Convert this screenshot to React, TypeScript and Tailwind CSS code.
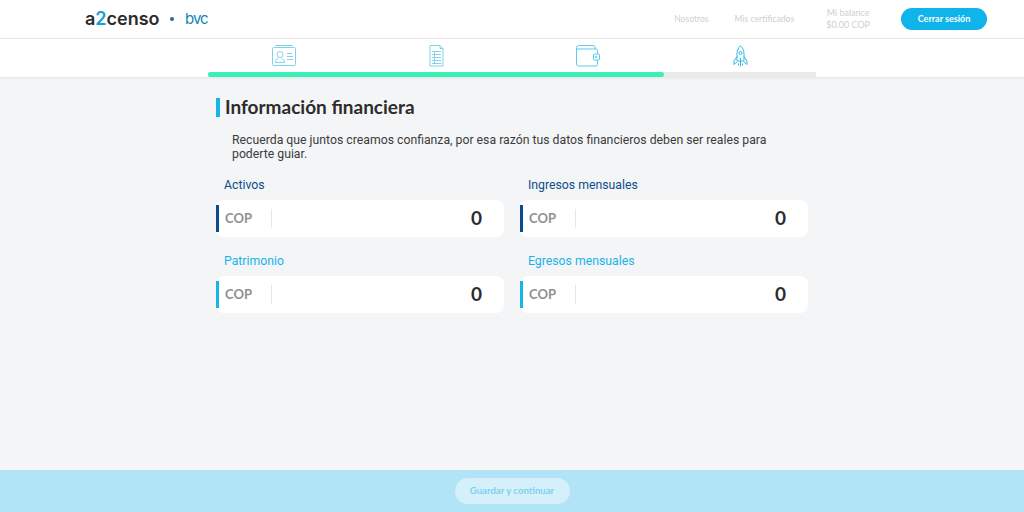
import { FunctionComponent, ReactNode } from "react";

const sans = "font-['Lato','Noto_Sans',sans-serif]";

const IdIcon = () => (
  <svg width="24" height="21" viewBox="0 0 24 21" fill="none" stroke="#7fd3ee" strokeWidth="1">
    <path d="M3 .5h18" />
    <rect x=".5" y="2.5" width="23" height="18" rx="1" />
    <circle cx="8" cy="9.500" r="3" />
    <path d="M3.500 17.500c0-2.500 1.500-3.500 2.800-4M12.500 17.500c0-2.500-1.500-3.500-2.800-4M3.500 17.500h9M15 8.500h5M15 11.500h6M15 14.500h6" />
  </svg>
);

const DocIcon = () => (
  <svg width="15" height="22" viewBox="0 0 15 22" fill="none" stroke="#7fd3ee" strokeWidth="1">
    <path d="M1 .5h10l3 3v17.500H1z" />
    <path d="M11 .5v3h3M3 6.500h9M3 9.500h9M3 12.500h9M3 15.500h9M3 18.500h9M5.500 6.500v12" />
  </svg>
);

const WalletIcon = () => (
  <svg width="24" height="22" viewBox="0 0 24 22" fill="none" stroke="#5ccbec" strokeWidth="1">
    <path d="M21.500 9V5.500a1.500 1.500 0 0 0-1.500-1.500H1M19 4V2a1.500 1.500 0 0 0-1.500-1.500H2.500a2 2 0 0 0-2 2V19a2 2 0 0 0 2 2H20a1.500 1.500 0 0 0 1.500-1.500V15" />
    <rect x="17.500" y="9" width="6" height="6" rx="1" />
    <circle cx="20" cy="12" r=".8" />
  </svg>
);

const RocketIcon = () => (
  <svg width="15" height="22" viewBox="0 0 15 22" fill="none" stroke="#2fb9e6" strokeWidth="1">
    <path d="M7.500.8C5 3 4 6 4 9v7h7V9c0-3-1-6-3.500-8.200z" />
    <circle cx="7.500" cy="8" r="1.500" />
    <path d="M4 11.500 1 16v3.500l3-2.500M11 11.500l3 4.500v3.500L11 17M7.500 13v8.500M5.500 18.500v2M9.500 18.500v2" />
  </svg>
);

const steps = [
  { key: "id", icon: <IdIcon /> },
  { key: "doc", icon: <DocIcon /> },
  { key: "wallet", icon: <WalletIcon /> },
  { key: "rocket", icon: <RocketIcon /> },
];

type MoneyFieldType = {
  label: string;
  labelClass: string;
  barClass: string;
};

const MoneyField: FunctionComponent<MoneyFieldType> = ({ label, labelClass, barClass }) => {
  return (
    <div className="flex flex-col">
      <div className={`pl-2 text-[12.25px] leading-[16px] font-['Roboto',sans-serif] ${labelClass}`}>{label}</div>
      <div className="mt-[7px] h-[37px] bg-white rounded-[8px] flex items-center relative">
        <div className={`absolute left-0 top-[5px] w-[3px] h-[27px] ${barClass}`} />
        <div className={`w-[56px] h-[19px] pl-[9px] border-r border-[#e6e6e6] text-[13px] leading-[19px] font-bold text-[#8f8f8f] ${sans}`}>
          COP
        </div>
        <div className={`flex-1 pr-[22px] pb-[2px] text-right text-[19px] leading-[20px] font-bold text-[#2c2c2c] ${sans}`}>0</div>
      </div>
    </div>
  );
};

const NavText: FunctionComponent<{ children: ReactNode; className?: string }> = ({ children, className = "" }) => (
  <span className={`text-[#cfcfcf] ${sans} ${className}`}>{children}</span>
);

const App: FunctionComponent = () => {
  return (
    <div className="h-screen flex flex-col bg-[#f4f5f7] overflow-hidden">
      <header className="h-[39px] shrink-0 bg-white border-b border-[#e8e8e8] flex items-center pl-[85px] pr-[37px]">
        <div className="flex items-center">
          <span className="w-[77px] text-[18px] leading-[24px] font-semibold text-[#2b2b2b] font-['Inter',sans-serif] whitespace-nowrap">
            a<span className="text-[#1a9fd8]">2</span>censo
          </span>
          <span className="w-[4px] h-[4px] rounded-full bg-[#1f6f94] ml-[8px]" />
          <span className="ml-[11px] text-[15px] leading-[24px] text-[#1386b5] tracking-[-1px] font-['Inter',sans-serif]">bvc</span>
        </div>
        <nav className="ml-auto flex items-center">
          <NavText className="text-[8.6px]">Nosotros</NavText>
          <NavText className="ml-[26px] text-[8.6px]">Mis certificados</NavText>
          <div className="ml-[32px] flex flex-col items-center">
            <NavText className="text-[9px] leading-[12px] text-[#adadad]">Mi balance</NavText>
            <NavText className="text-[9px] leading-[12px]">$0.00 COP</NavText>
          </div>
          <button className={`ml-[31px] w-[86px] h-[22px] rounded-full bg-[#0fb4ea] text-white text-[9px] font-bold ${sans}`}>
            Cerrar sesión
          </button>
        </nav>
      </header>

      <div className="h-[38px] shrink-0 bg-white shadow-[0_1px_3px_rgba(0,0,0,0.08)] flex flex-col items-center">
        <div className="w-[608px] h-[33px] grid grid-cols-4">
          {steps.map((s) => (
            <div key={s.key} className="flex items-center justify-center">
              {s.icon}
            </div>
          ))}
        </div>
        <div className="w-[608px] h-[5px] bg-[#e9e9ea]">
          <div className="w-[456px] h-full bg-[#3bf0b6] rounded-[3px]" />
        </div>
      </div>

      <main className="flex-1 w-[592px] mx-auto">
        <div className="mt-[21px] flex items-center h-[19px]">
          <div className="w-[4px] h-[19px] bg-[#18b4e8]" />
          <h1 className={`ml-[5px] pb-[2px] text-[19px] leading-[19px] font-bold text-[#2c2c2c] ${sans}`}>
            Información financiera
          </h1>
        </div>
        <p className="mt-[16px] pl-[16px] pr-[30px] text-[12.25px] leading-[14px] text-[#3c3c3c] font-['Roboto',sans-serif]">
          Recuerda que juntos creamos confianza, por esa razón tus datos financieros deben ser reales para poderte guiar.
        </p>
        <div className="mt-[16px] grid grid-cols-2 gap-x-[16px] gap-y-[16px]">
          <MoneyField label="Activos" labelClass="text-[#0f4c8a]" barClass="bg-[#0b4a8f]" />
          <MoneyField label="Ingresos mensuales" labelClass="text-[#0f4c8a]" barClass="bg-[#0b4a8f]" />
          <MoneyField label="Patrimonio" labelClass="text-[#18b4e8]" barClass="bg-[#18b4e8]" />
          <MoneyField label="Egresos mensuales" labelClass="text-[#18b4e8]" barClass="bg-[#18b4e8]" />
        </div>
      </main>

      <footer className="h-[42px] shrink-0 bg-[#b2e4f7] flex items-center justify-center">
        <button className={`w-[115px] h-[26px] rounded-full bg-[#d5f0fb] text-[#7fd0ef] text-[9.6px] font-bold ${sans}`}>
          Guardar y continuar
        </button>
      </footer>
    </div>
  );
};

export default App;
